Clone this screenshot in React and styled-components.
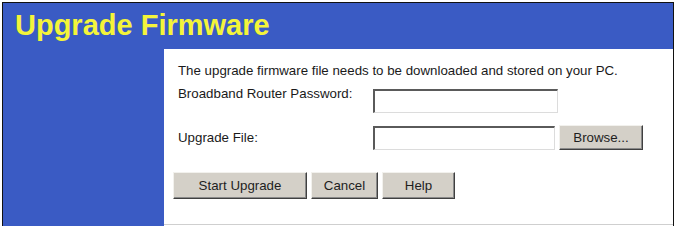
import styled, { createGlobalStyle } from "styled-components";

const Global = createGlobalStyle`
    html, body {
        margin: 0;
        padding: 0;
        background: #ffffff;
    }
    body {
        font-family: "Liberation Sans", Arial, sans-serif;
        overflow: hidden;
    }
`

const Frame = styled.div`
    margin: 2px 0 0 2px;
    width: 672px;
    border: 1px solid #111;
    border-bottom: none;
    box-sizing: border-box;
    display: flex;
    flex-direction: column;
`

const Header = styled.header`
    background: #3a5bc4;
    height: 46px;
    padding: 8px 0 0 12px;
    box-sizing: border-box;

    h1 {
        margin: 0;
        color: #f4f43a;
        font-size: 29px;
        line-height: 29px;
        font-weight: bold;
    }
`

const Body = styled.div`
    display: flex;
    height: 177px;
`

const Sidebar = styled.aside`
    background: #3a5bc4;
    width: 161px;
    flex-shrink: 0;
`

const Content = styled.section`
    flex: 1;
    background: #ffffff;
    height: 176px;
    border-bottom: 1px solid #cfcfcf;
    padding: 14px 0 0 14px;
    box-sizing: border-box;
    display: flex;
    flex-direction: column;
    color: #1a1a1a;
    font-size: 13.3px;
    line-height: 16px;
`

const Intro = styled.p`
    margin: 0 0 7px 0;
    line-height: 16px;
`

const Row = styled.div`
    display: flex;
    align-items: ${({ $center }) => ($center ? "center" : "flex-start")};
    margin-top: ${({ $top }) => $top || 0}px;
`

const Label = styled.label`
    width: 195px;
    flex-shrink: 0;
    line-height: 16px;
`

const Field = styled.input`
    width: ${({ $w }) => $w}px;
    height: 24px;
    box-sizing: border-box;
    margin: ${({ $offset }) => $offset || 0}px 0 0 0;
    padding: 0 3px;
    background: #ffffff;
    border-top: 2px solid #5a5a5a;
    border-left: 2px solid #5a5a5a;
    border-right: 1px solid #dcdcdc;
    border-bottom: 1px solid #dcdcdc;
    outline: none;
    font-family: inherit;
    font-size: 13px;
`

const Button = styled.button`
    width: ${({ $w }) => $w}px;
    height: ${({ $h }) => $h || 27}px;
    box-sizing: border-box;
    margin-left: ${({ $left }) => $left || 0}px;
    background: #d4d0c8;
    border-top: 1px solid #f2f1ed;
    border-left: 1px solid #f2f1ed;
    border-right: 1px solid #404040;
    border-bottom: 1px solid #404040;
    box-shadow: inset -1px -1px 0 #8a8a8a;
    font-family: "Liberation Sans", Arial, sans-serif;
    font-size: 13.3px;
    color: #1e1e1e;
    padding: 0;
    cursor: pointer;
`

const Buttons = styled.div`
    display: flex;
    gap: 4px;
    margin: 22px 0 0 -5px;
`

export default function App() {
    return (
        <>
            <Global />
            <Frame>
                <Header>
                    <h1>Upgrade Firmware</h1>
                </Header>
                <Body>
                    <Sidebar />
                    <Content>
                        <Intro>The upgrade firmware file needs to be downloaded and stored on your PC.</Intro>
                        <Row>
                            <Label>Broadband Router Password:</Label>
                            <Field type="password" $w={185} $offset={3} />
                        </Row>
                        <Row $center $top={12}>
                            <Label>Upgrade File:</Label>
                            <Field type="text" $w={182} />
                            <Button $w={84} $h={25} $left={4}>Browse...</Button>
                        </Row>
                        <Buttons>
                            <Button $w={134}>Start Upgrade</Button>
                            <Button $w={67}>Cancel</Button>
                            <Button $w={73}>Help</Button>
                        </Buttons>
                    </Content>
                </Body>
            </Frame>
        </>
    )
}
